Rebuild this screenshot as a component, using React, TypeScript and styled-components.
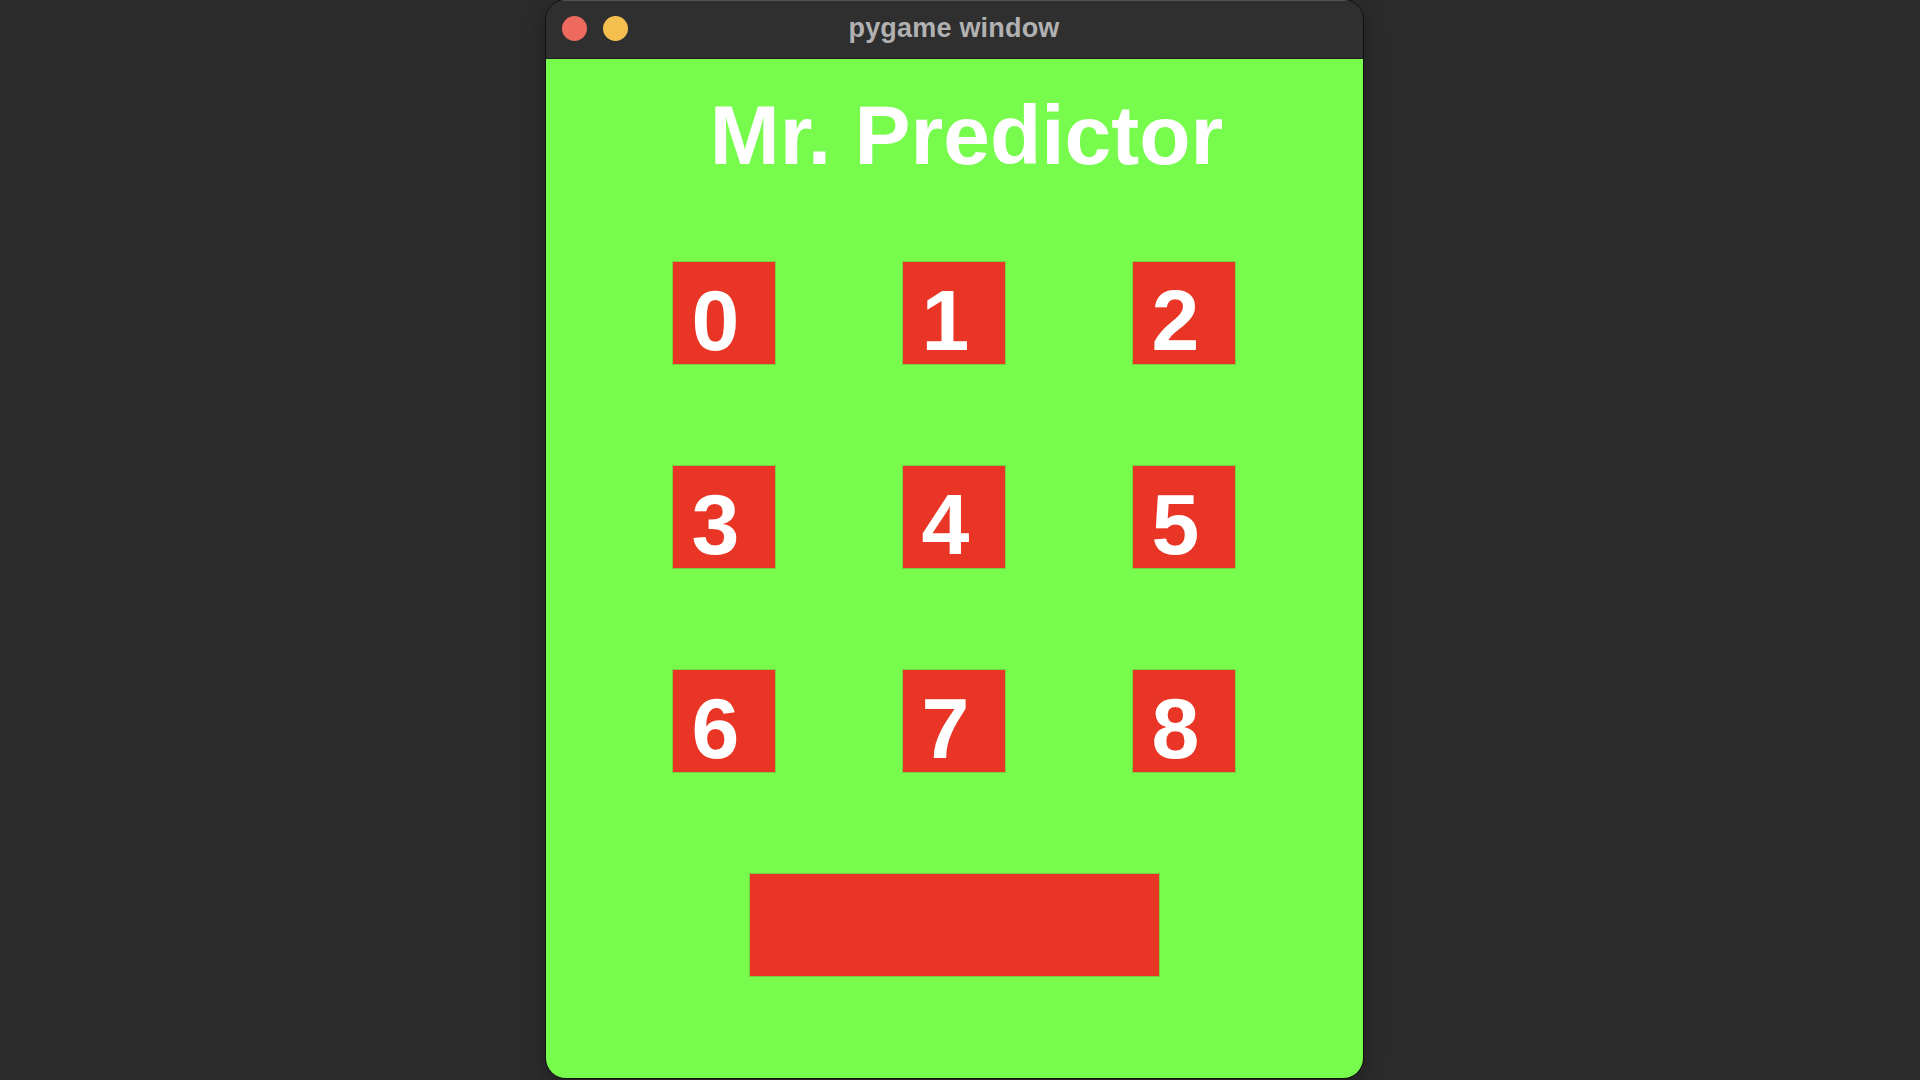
import React from "react";
import styled, { createGlobalStyle } from "styled-components";

const Global = createGlobalStyle`
  html, body {
    margin: 0;
    padding: 0;
    background: #2c2c2c;
    height: 100%;
  }
  body {
    font-family: "Liberation Sans", Arial, sans-serif;
    overflow: hidden;
  }
`;

const Desktop = styled.div`
  width: 1920px;
  height: 1080px;
  background: #2c2c2c;
  display: flex;
  align-items: flex-start;
`;

const Window = styled.div`
  margin-left: 546px;
  width: 817px;
  height: 1078px;
  border-radius: 20px;
  overflow: hidden;
  display: flex;
  flex-direction: column;
  box-shadow: 0 0 0 1px rgba(0, 0, 0, 0.55), 0 6px 24px rgba(0, 0, 0, 0.35);
`;

const TitleBar = styled.div`
  height: 57px;
  flex: 0 0 57px;
  background: #2f2f2f;
  border-top: 1px solid #545454;
  border-bottom: 1px solid #1f1f1f;
  position: relative;
  display: flex;
  align-items: center;
  justify-content: center;
`;

const Lights = styled.div`
  position: absolute;
  left: 16px;
  top: 15px;
  display: flex;
  gap: 16px;
`;

const Light = styled.span<{ $color: string }>`
  width: 25px;
  height: 25px;
  border-radius: 50%;
  background: ${(p) => p.$color};
  display: block;
`;

const WindowTitle = styled.div`
  font-family: "Liberation Sans", Arial, sans-serif;
  font-weight: 700;
  font-size: 27px;
  color: #b1b1b1;
  letter-spacing: 0.2px;
  margin-right: 1px;
  margin-top: -2px;
`;

const Content = styled.div`
  flex: 1;
  background: #77fc4d;
  display: flex;
  flex-direction: column;
  align-items: center;
`;

const Heading = styled.h1`
  margin: 29px 0 0 24px;
  font-family: "Liberation Sans", Arial, sans-serif;
  font-weight: 700;
  font-size: 84px;
  line-height: 95px;
  letter-spacing: 0px;
  color: #ffffff;
`;

const Pad = styled.div`
  margin: 79px 2px 0 0;
  display: grid;
  grid-template-columns: repeat(3, 102px);
  grid-auto-rows: 102px;
  column-gap: 128px;
  row-gap: 102px;
`;

const Key = styled.div`
  background: #e93526;
  box-shadow: 0 0 0 1px rgba(120, 130, 40, 0.35);
  display: flex;
  align-items: center;
  justify-content: center;
  padding: 14px 16px 0 0;
  box-sizing: border-box;
  font-family: "Liberation Sans", Arial, sans-serif;
  font-weight: 700;
  font-size: 86px;
  line-height: 1;
  color: #ffffff;
`;

const WideBar = styled.div`
  margin: 102px 0 0 0;
  width: 409px;
  height: 102px;
  background: #e93526;
  box-shadow: 0 0 0 1px rgba(120, 130, 40, 0.35);
`;

const digits = ["0", "1", "2", "3", "4", "5", "6", "7", "8"];

export default function App() {
  return (
    <>
      <Global />
      <Desktop>
        <Window>
          <TitleBar>
            <Lights>
              <Light $color="#ee6a5f" />
              <Light $color="#f5bf4f" />
            </Lights>
            <WindowTitle>pygame window</WindowTitle>
          </TitleBar>
          <Content>
            <Heading>Mr. Predictor</Heading>
            <Pad>
              {digits.map((d) => (
                <Key key={d}>{d}</Key>
              ))}
            </Pad>
            <WideBar />
          </Content>
        </Window>
      </Desktop>
    </>
  );
}
